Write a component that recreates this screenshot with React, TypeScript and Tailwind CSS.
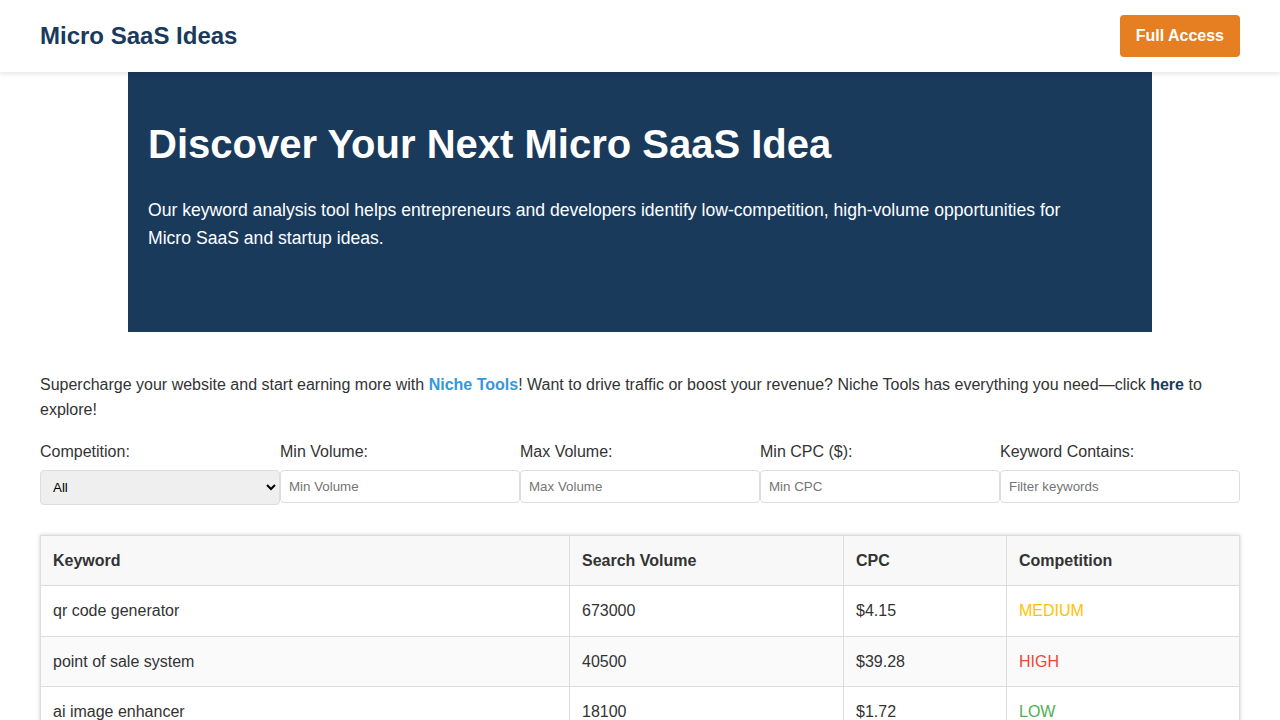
const rows = [
  { keyword: 'qr code generator', volume: '673000', cpc: '$4.15', competition: 'MEDIUM', color: 'text-[#ffc107]' },
  { keyword: 'point of sale system', volume: '40500', cpc: '$39.28', competition: 'HIGH', color: 'text-[#f44336]' },
  { keyword: 'ai image enhancer', volume: '18100', cpc: '$1.72', competition: 'LOW', color: 'text-[#4caf50]' },
];

const filters = [
  { label: 'Max Volume:', placeholder: 'Max Volume' },
  { label: 'Min CPC ($):', placeholder: 'Min CPC' },
  { label: 'Keyword Contains:', placeholder: 'Filter keywords' },
];

const Field = ({ label, placeholder }: { label: string; placeholder: string }) => (
  <div className="w-[240px]">
    <label className="block mb-[6px] leading-[25px]">{label}</label>
    <input
      placeholder={placeholder}
      className="block w-full h-[33px] px-2 text-[13.33px] bg-white border border-[#ddd] rounded outline-none placeholder:text-[#757575]"
    />
  </div>
);

const App = () => {
  return (
    <div className="min-h-screen bg-white text-[#333] text-base font-['Liberation_Sans',Arial,sans-serif]">
      <header className="relative z-10 h-[72px] flex items-center justify-between px-10 bg-white shadow-[0_2px_5px_rgba(0,0,0,0.1)]">
        <h1 className="text-2xl font-bold text-[#1a3a5c]">Micro SaaS Ideas</h1>
        <button className="h-[42px] px-4 bg-[#e67e22] text-white font-bold rounded">Full Access</button>
      </header>

      <section className="w-[1024px] h-[260px] mx-auto px-5 pt-[40px] bg-[#1a3a5c] text-white">
        <h2 className="text-[40px] leading-[64px] font-bold mb-[20px]">Discover Your Next Micro SaaS Idea</h2>
        <p className="max-w-[960px] text-[17.6px] leading-[28px]">
          Our keyword analysis tool helps entrepreneurs and developers identify low-competition, high-volume opportunities for Micro SaaS and startup ideas.
        </p>
      </section>

      <main className="px-10 pt-10">
        <p className="leading-[25px] mb-[17px]">
          Supercharge your website and start earning more with{' '}
          <a className="font-bold text-[#3498db]">Niche Tools</a>! Want to drive traffic or boost your revenue? Niche Tools has everything you need—click{' '}
          <a className="font-bold text-[#1a3a5c]">here</a> to explore!
        </p>

        <div className="flex mb-[30px]">
          <div className="w-[240px]">
            <label className="block mb-[6px] leading-[25px]">Competition:</label>
            <select className="block w-full h-[35px] pl-2 text-[13.33px] text-black bg-[#efefef] border border-[#ddd] rounded outline-none">
              <option>All</option>
            </select>
          </div>
          <Field label="Min Volume:" placeholder="Min Volume" />
          {filters.map((f) => (
            <Field key={f.label} label={f.label} placeholder={f.placeholder} />
          ))}
        </div>

        <table className="w-full border-collapse table-fixed leading-[25.4px] shadow-[0_0_4px_rgba(0,0,0,0.2)]">
          <thead>
            <tr className="bg-[#f8f8f8] text-left">
              <th className="w-[529px] p-3 border border-[#ddd] font-bold">Keyword</th>
              <th className="w-[274px] p-3 border border-[#ddd] font-bold">Search Volume</th>
              <th className="w-[163px] p-3 border border-[#ddd] font-bold">CPC</th>
              <th className="p-3 border border-[#ddd] font-bold">Competition</th>
            </tr>
          </thead>
          <tbody>
            {rows.map((r) => (
              <tr key={r.keyword} className="even:bg-[#fafafa]">
                <td className="p-3 border border-[#ddd]">{r.keyword}</td>
                <td className="p-3 border border-[#ddd]">{r.volume}</td>
                <td className="p-3 border border-[#ddd]">{r.cpc}</td>
                <td className={`p-3 border border-[#ddd] ${r.color}`}>{r.competition}</td>
              </tr>
            ))}
          </tbody>
        </table>
      </main>
    </div>
  );
};

export default App;
